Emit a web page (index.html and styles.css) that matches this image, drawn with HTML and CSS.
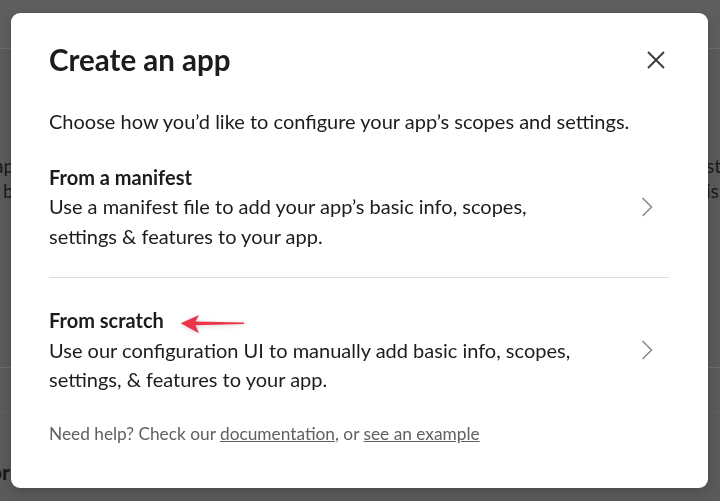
FILE: index.html
```html
<!DOCTYPE html>
<html lang="en">
<head>
<meta charset="utf-8">
<title>Create an app</title>
<link rel="stylesheet" href="styles.css">
</head>
<body>
<div class="page" aria-hidden="true">
  <div class="page-header"></div>
  <div class="page-body">
    <div class="page-row">
      <div class="page-col left"><p class="l1">apps</p><p class="l2">build</p></div>
      <div class="page-col right"><p>st</p><p>is</p></div>
    </div>
    <div class="page-band"></div>
    <div class="page-foot"><span class="foot-left">or</span></div>
  </div>
</div>

<div class="overlay">
  <div class="modal" role="dialog" aria-labelledby="modal-title">
    <div class="modal-header">
      <h1 id="modal-title">Create an app</h1>
      <button class="close" aria-label="Close">
        <svg width="18" height="18" viewBox="0 0 18 18"><path d="M1 1 L17 17 M17 1 L1 17" stroke="#3a3a3a" stroke-width="1.9" fill="none"/></svg>
      </button>
    </div>
    <p class="intro">Choose how you’d like to configure your app’s scopes and settings.</p>
    <div class="option">
      <div class="option-text">
        <div class="option-title">From a manifest</div>
        <div class="option-desc">Use a manifest file to add your app’s basic info, scopes,<br>settings &amp; features to your app.</div>
      </div>
      <svg class="chevron" width="12" height="20" viewBox="0 0 12 20"><path d="M1.5 1 L10.5 10 L1.5 19" stroke="#8c8c8c" stroke-width="1.6" fill="none"/></svg>
    </div>
    <div class="option second">
      <div class="option-text">
        <div class="option-title"><span class="title-wrap">From scratch<svg class="arrow" width="70" height="24" viewBox="0 0 70 24"><path d="M1.7 10.3 L20 2 L16.5 8.6 L65 9.6 L65 11 L16.5 12.2 L20 20.3 Z" fill="#ec3449"/></svg></span></div>
        <div class="option-desc">Use our configuration UI to manually add basic info, scopes,<br>settings, &amp; features to your app.</div>
      </div>
      <svg class="chevron" width="12" height="20" viewBox="0 0 12 20"><path d="M1.5 1 L10.5 10 L1.5 19" stroke="#8c8c8c" stroke-width="1.6" fill="none"/></svg>
    </div>
    <p class="help">Need help? Check our <a href="#">documentation</a>, or <a href="#">see an example</a></p>
  </div>
</div>
</body>
</html>
```

FILE: styles.css
```css
* { box-sizing: border-box; }
html, body { margin: 0; height: 100%; }
body {
  background: #5a5a5a;
  font-family: Lato, "Noto Sans", sans-serif;
  color: #1d1c1d;
  overflow: hidden;
}

/* dimmed page behind the dialog */
.page { height: 100%; }
.page-header {
  height: 49px;
  background: #5e5e5e;
  border-bottom: 1px solid #6a6a6a;
}
.page-body { display: flex; flex-direction: column; }
.page-row {
  display: flex;
  justify-content: space-between;
  padding-top: 104px;
  font-size: 19px;
  line-height: 25px;
  color: #1b1b1b;
}
.page-col p { margin: 0; white-space: nowrap; }
.page-col.left .l1 { margin-left: -6px; }
.page-col.left .l2 { margin-left: 3px; }
.page-col.right { width: 14px; overflow: hidden; }
.page-band {
  margin-top: 164px;
  height: 46px;
  border-top: 1px solid #6a6a6a;
  border-bottom: 1px solid #626262;
}
.page-foot {
  padding-top: 46px;
  font-size: 21px;
  font-weight: 700;
  color: #151515;
}
.foot-left { margin-left: -10px; }

/* dialog */
.overlay {
  position: fixed;
  inset: 0;
  padding: 13px 12px 13px 11px;
  display: flex;
}
.modal {
  flex: 1;
  background: #fff;
  border-radius: 9px;
  padding: 29px 39px 0 38px;
  box-shadow: 0 0 0 1px rgba(0,0,0,0.05), 0 4px 12px rgba(0,0,0,0.15);
}
.modal-header {
  display: flex;
  justify-content: space-between;
  align-items: center;
}
.modal-header h1 {
  margin: 0;
  font-size: 29.5px;
  line-height: 36px;
  font-weight: 700;
  color: #1d1c1d;
}
.close {
  width: 36px;
  height: 36px;
  margin-right: -5px;
  margin-top: 0;
  border: 0;
  background: none;
  padding: 0;
  display: flex;
  align-items: center;
  justify-content: center;
}
.intro {
  margin: 29px 0 0;
  font-size: 20px;
  line-height: 29.5px;
}
.option {
  display: flex;
  align-items: center;
  justify-content: space-between;
  padding: 26px 0 26px;
  font-size: 20px;
  line-height: 29.5px;
}
.option + .option { border-top: 1px solid #dddddd; padding: 28px 0 26px; }
.option-title { font-weight: 700; }
.title-wrap { position: relative; }
.arrow {
  position: absolute;
  left: calc(100% + 15px);
  top: 5px;
  filter: drop-shadow(0 1px 2px rgba(0,0,0,0.18));
}
.chevron { margin-right: 16px; flex: none; }
.help {
  margin: 1px 0 0;
  font-size: 17.3px;
  line-height: 24px;
  color: #616061;
}
.help a { color: #616061; text-decoration: underline; }
```
